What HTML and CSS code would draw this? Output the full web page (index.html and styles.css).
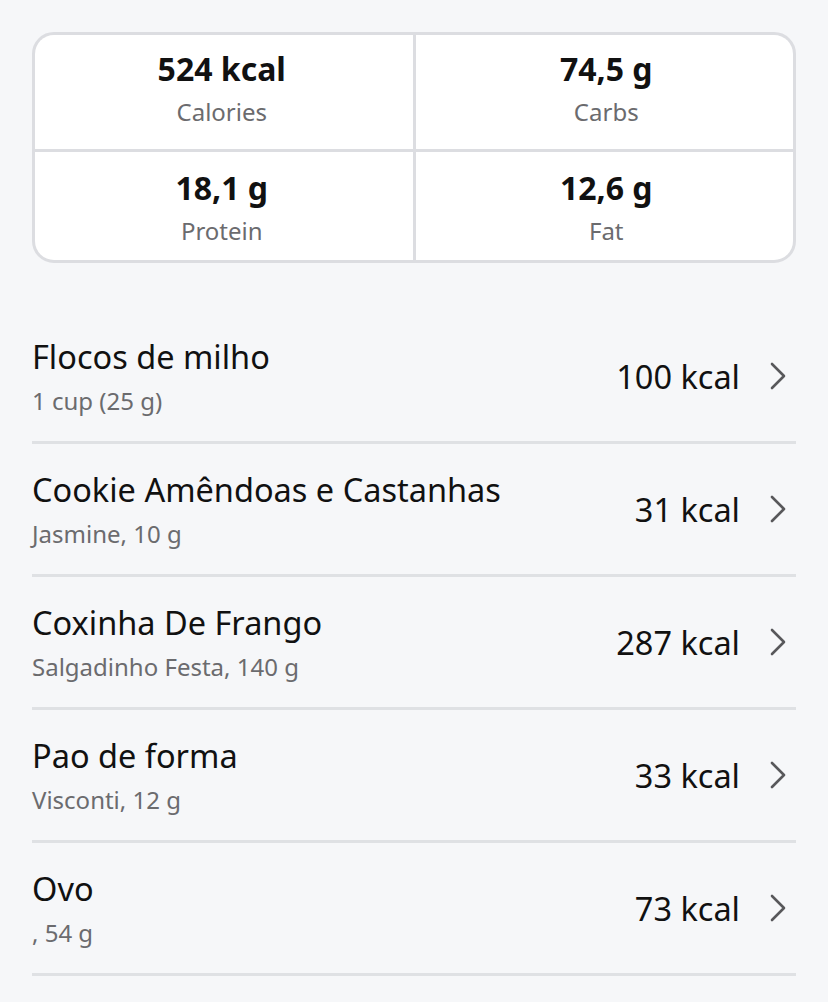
FILE: index.html
```html
<!DOCTYPE html>
<html lang="pt">
<head>
<meta charset="utf-8">
<link rel="stylesheet" href="styles.css">
</head>
<body>
<main class="page">
  <section class="summary">
    <div class="cell cell-top cell-left">
      <div class="value">524 kcal</div>
      <div class="label">Calories</div>
    </div>
    <div class="cell cell-top cell-right">
      <div class="value">74,5 g</div>
      <div class="label">Carbs</div>
    </div>
    <div class="cell cell-bottom cell-left">
      <div class="value">18,1 g</div>
      <div class="label">Protein</div>
    </div>
    <div class="cell cell-bottom cell-right">
      <div class="value">12,6 g</div>
      <div class="label">Fat</div>
    </div>
  </section>

  <ul class="foods">
    <li class="food">
      <div class="info">
        <div class="name">Flocos de milho</div>
        <div class="detail">1 cup (25 g)</div>
      </div>
      <div class="kcal">100 kcal</div>
      <svg class="chev" viewBox="0 0 16 28" width="16" height="28"><polyline points="2,2 14,14 2,26"/></svg>
    </li>
    <li class="food">
      <div class="info">
        <div class="name">Cookie Amêndoas e Castanhas</div>
        <div class="detail">Jasmine, 10 g</div>
      </div>
      <div class="kcal">31 kcal</div>
      <svg class="chev" viewBox="0 0 16 28" width="16" height="28"><polyline points="2,2 14,14 2,26"/></svg>
    </li>
    <li class="food">
      <div class="info">
        <div class="name">Coxinha De Frango</div>
        <div class="detail">Salgadinho Festa, 140 g</div>
      </div>
      <div class="kcal">287 kcal</div>
      <svg class="chev" viewBox="0 0 16 28" width="16" height="28"><polyline points="2,2 14,14 2,26"/></svg>
    </li>
    <li class="food">
      <div class="info">
        <div class="name">Pao de forma</div>
        <div class="detail">Visconti, 12 g</div>
      </div>
      <div class="kcal">33 kcal</div>
      <svg class="chev" viewBox="0 0 16 28" width="16" height="28"><polyline points="2,2 14,14 2,26"/></svg>
    </li>
    <li class="food">
      <div class="info">
        <div class="name">Ovo</div>
        <div class="detail">, 54 g</div>
      </div>
      <div class="kcal">73 kcal</div>
      <svg class="chev" viewBox="0 0 16 28" width="16" height="28"><polyline points="2,2 14,14 2,26"/></svg>
    </li>
  </ul>
</main>
</body>
</html>
```

FILE: styles.css
```css
* { box-sizing: border-box; }

html, body {
  margin: 0;
  padding: 0;
  background: #f6f7f9;
}

body {
  font-family: "Noto Sans", "Open Sans", sans-serif;
  color: #111111;
}

.page {
  padding: 32px 32px 0;
}

.summary {
  display: grid;
  grid-template-columns: 1fr 1fr;
  grid-template-rows: 114px 108px;
  gap: 3px;
  background: #dcdde1;
  border: 3px solid #dcdde1;
  border-radius: 22px;
  overflow: hidden;
}

.cell {
  background: #ffffff;
  display: flex;
  flex-direction: column;
  align-items: center;
}

.cell-left { padding-right: 4px; }
.cell-right { padding-left: 4px; }

.cell-top { padding-top: 12px; }
.cell-bottom { padding-top: 14px; }

.value {
  font-size: 32px;
  line-height: 44px;
  font-weight: 700;
  color: #111111;
}

.label {
  font-size: 24px;
  line-height: 32px;
  color: #6b6b6e;
  margin-top: 5px;
}

.foods {
  list-style: none;
  margin: 48px 0 0;
  padding: 0;
}

.food {
  display: flex;
  align-items: center;
  padding: 24px 0;
  border-bottom: 3px solid #dfe1e4;
}

.info {
  flex: 1;
  min-width: 0;
}

.name {
  font-size: 32.5px;
  line-height: 44px;
  color: #111111;
}

.detail {
  font-size: 24px;
  line-height: 32px;
  color: #6b6b6e;
  margin-top: 6px;
}

.kcal {
  font-size: 32.5px;
  line-height: 44px;
  color: #111111;
  margin-top: 1px;
}

.chev {
  margin-left: 30px;
  margin-right: 10px;
  fill: none;
  stroke: #58585b;
  stroke-width: 2.6;
  stroke-linecap: round;
  stroke-linejoin: round;
}
```
